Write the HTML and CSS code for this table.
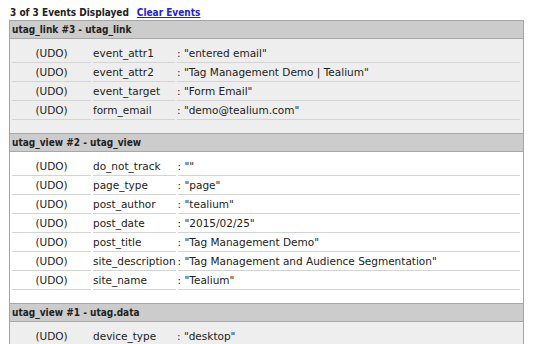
FILE: index.html
```html
<!DOCTYPE html>
<html lang="en">
<head>
    <meta charset="UTF-8">
    <title>Event Log</title>
    <link rel="stylesheet" href="styles.css">
</head>
<body>
    <div class="summary">
        <b>3 of 3 Events Displayed</b>
        <a href="#" class="clear">Clear Events</a>
    </div>

    <div class="events">
        <!-- utag_link #3 -->
        <div class="event shaded">
            <div class="event-head">utag_link #3 - utag_link</div>
            <table class="attrs">
                <tr><td class="src">(UDO)</td><td class="key">event_attr1</td><td class="val">: "entered email"</td></tr>
                <tr><td class="src">(UDO)</td><td class="key">event_attr2</td><td class="val">: "Tag Management Demo | Tealium"</td></tr>
                <tr><td class="src">(UDO)</td><td class="key">event_target</td><td class="val">: "Form Email"</td></tr>
                <tr><td class="src">(UDO)</td><td class="key">form_email</td><td class="val">: "demo@tealium.com"</td></tr>
            </table>
        </div>

        <!-- utag_view #2 -->
        <div class="event">
            <div class="event-head">utag_view #2 - utag_view</div>
            <table class="attrs">
                <tr><td class="src">(UDO)</td><td class="key">do_not_track</td><td class="val">: ""</td></tr>
                <tr><td class="src">(UDO)</td><td class="key">page_type</td><td class="val">: "page"</td></tr>
                <tr><td class="src">(UDO)</td><td class="key">post_author</td><td class="val">: "tealium"</td></tr>
                <tr><td class="src">(UDO)</td><td class="key">post_date</td><td class="val">: "2015/02/25"</td></tr>
                <tr><td class="src">(UDO)</td><td class="key">post_title</td><td class="val">: "Tag Management Demo"</td></tr>
                <tr><td class="src">(UDO)</td><td class="key">site_description</td><td class="val">: "Tag Management and Audience Segmentation"</td></tr>
                <tr><td class="src">(UDO)</td><td class="key">site_name</td><td class="val">: "Tealium"</td></tr>
            </table>
        </div>

        <!-- utag_view #1 -->
        <div class="event shaded">
            <div class="event-head">utag_view #1 - utag.data</div>
            <table class="attrs">
                <tr><td class="src">(UDO)</td><td class="key">device_type</td><td class="val">: "desktop"</td></tr>
            </table>
        </div>
    </div>
</body>
</html>
```

FILE: styles.css
```css
body { margin: 0; padding: 5px 10px 0 9px; font-family: "DejaVu Sans", Verdana, sans-serif; font-size: 10.5px; color: #222; }
.summary { padding-left: 1px; height: 15px; line-height: 15px; font-size: 10px; font-stretch: condensed; }
.summary b { font-weight: bold; }
.clear { color: #2323d8; font-weight: bold; margin-left: 5px; }
.events { border: 1px solid #a5a5a5; border-bottom: none; }
.event { background: #fff; padding-bottom: 13px; }
.event.shaded { background: #eeeeee; }
.event-head { background: #cccccc; font-size: 10px; font-weight: bold; font-stretch: condensed; height: 17px; line-height: 17px; padding-left: 2px; border-top: 1px solid #a8a8a8; border-bottom: 1px solid #a8a8a8; }
.event:first-child .event-head { border-top: none; }
.attrs { width: 100%; border-collapse: separate; border-spacing: 2px 0; margin-top: 5px; padding-right: 1px; }
.attrs td { height: 18px; padding: 0; border-bottom: 1px solid #d4d4d4; white-space: nowrap; }
.attrs .src { width: 79px; text-align: center; }
.attrs .key { width: 82px; }
```
